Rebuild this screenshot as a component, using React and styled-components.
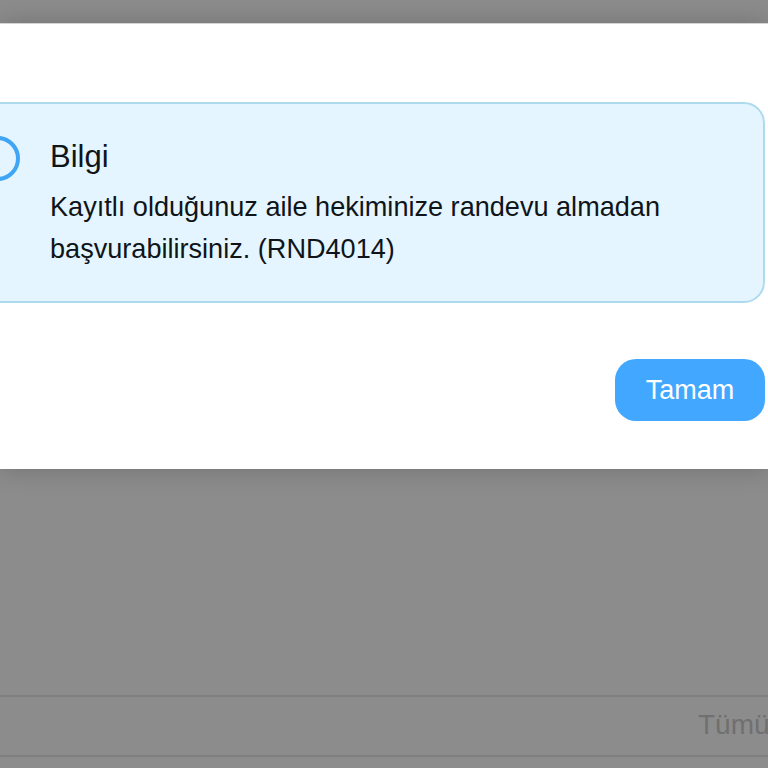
import React from "react";
import styled, { createGlobalStyle } from "styled-components";

const Global = createGlobalStyle`
  html, body { margin: 0; padding: 0; }
  body { font-family: "Liberation Sans", Arial, sans-serif; }
`;

const Page = styled.div`
  width: 768px;
  height: 768px;
  overflow: hidden;
  background: #8c8c8c;
  display: flex;
  flex-direction: column;
  padding-top: 23px;
  box-sizing: border-box;
`;

const Modal = styled.section`
  flex: 0 0 446px;
  background: #fff;
  box-shadow: 0 0 24px rgba(0, 0, 0, 0.2);
  border-top: 1px solid #d4d4d4;
  display: flex;
  flex-direction: column;
  padding: 78px 3px 0 0;
  box-sizing: border-box;
`;

const InfoBox = styled.div`
  height: 201px;
  margin-left: -40px;
  box-sizing: border-box;
  background: #e4f5ff;
  border: 2px solid #aedaee;
  border-radius: 21px;
  display: flex;
  align-items: flex-start;
  padding: 31px 0 0 13px;
  gap: 30px;
`;

const InfoCircle = styled.div`
  flex: 0 0 45px;
  height: 45px;
  border: 4px solid #3fa5f5;
  border-radius: 50%;
  box-sizing: border-box;
  margin-top: 1px;
`;

const InfoText = styled.div`
  display: flex;
  flex-direction: column;
  color: #0f1419;
`;

const Title = styled.h2`
  margin: 0 0 7px;
  font-size: 31px;
  line-height: 44px;
  font-weight: 400;
`;

const Message = styled.p`
  margin: 0;
  font-size: 27.1px;
  line-height: 42px;
  width: 640px;
`;

const Footer = styled.div`
  display: flex;
  justify-content: flex-end;
  margin-top: 56px;
`;

const OkButton = styled.button`
  width: 150px;
  height: 62px;
  border: 0;
  border-radius: 21px;
  background: #41a7ff;
  color: #fff;
  font: 400 27px "Liberation Sans", Arial, sans-serif;
  padding: 0;
`;

const Backdrop = styled.div`
  flex: 1;
  display: flex;
  flex-direction: column;
  padding-top: 226px;
`;

const FilterRow = styled.div`
  height: 62px;
  border-top: 2px solid #7f7f7f;
  border-bottom: 2px solid #7f7f7f;
  box-sizing: border-box;
  display: flex;
  align-items: center;
  padding: 0 0 3px 698px;
  white-space: nowrap;
  font-size: 28px;
  color: #707070;
  width: 800px;
`;

export default function App() {
  return (
    <>
      <Global />
      <Page>
        <Modal>
          <InfoBox>
            <InfoCircle />
            <InfoText>
              <Title>Bilgi</Title>
              <Message>
                Kayıtlı olduğunuz aile hekiminize randevu almadan başvurabilirsiniz. (RND4014)
              </Message>
            </InfoText>
          </InfoBox>
          <Footer>
            <OkButton>Tamam</OkButton>
          </Footer>
        </Modal>
        <Backdrop>
          <FilterRow>Tümü</FilterRow>
        </Backdrop>
      </Page>
    </>
  );
}
